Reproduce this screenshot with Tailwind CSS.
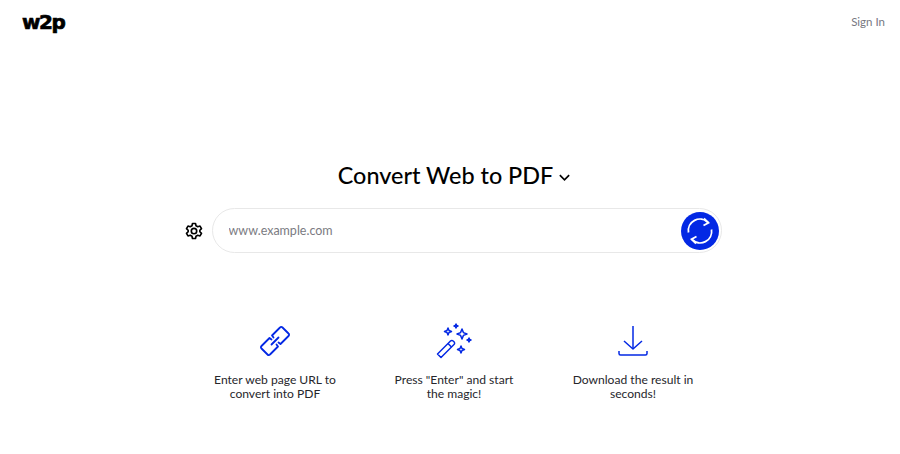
<!DOCTYPE html>
<html lang="en">
<head>
    <meta charset="UTF-8">
    <title>Convert Web to PDF</title>
    <script src="https://cdn.jsdelivr.net/npm/@tailwindcss/browser@4"></script>
</head>
<body class="bg-white h-[454px] overflow-hidden font-['Lato',sans-serif] text-[#1a1a1a]">
    <header class="flex items-start justify-between h-[44px] pl-[22px] pr-[15px] pt-[8px]">
        <a href="#" class="font-['DejaVu_Sans',sans-serif] font-bold text-[20px] leading-[28px] tracking-[-1.4px] text-black [-webkit-text-stroke:0.7px_black]">w2p</a>
        <a href="#" class="text-[11.5px] leading-[28px] text-[#77787f]">Sign In</a>
    </header>

    <main class="flex flex-col items-center pl-[8px]">
        <h1 class="mt-[114px] ml-[1px] flex items-center gap-[5px] h-[36px] text-[23.4px] font-medium text-black">
            Convert Web to PDF
            <svg class="w-[13px] h-[13px] mt-[3px]" viewBox="0 0 14 14" fill="none" stroke="#000" stroke-width="1.8"><path d="M2 4.500l5 5 5-5"/></svg>
        </h1>

        <div class="mt-[14px] flex items-center w-[537px] -ml-[2px]">
            <svg class="w-[18px] h-[18px] mr-[9px] shrink-0" viewBox="0 0 24 24" fill="none" stroke="#000" stroke-width="2.200" stroke-linejoin="round"><circle cx="12" cy="12" r="3.600"/><path d="M10 2h4l.7 3 2.300 1.300 3-.9 2 3.400-2.200 2.200v2l2.200 2.200-2 3.400-3-.9L14.700 19l-.7 3h-4l-.7-3L7 17.700l-3 .9-2-3.400L4.200 13v-2L2 8.800l2-3.400 3 .9L9.300 5z"/></svg>
            <div class="flex items-center justify-between flex-1 h-[45px] border border-[#e8e8e8] rounded-full pl-[16px] pr-[2px]">
                <input type="text" placeholder="www.example.com" class="flex-1 outline-none text-[12.5px] mt-[2px] text-[#7b7b82] placeholder:text-[#7b7b82]">
                <button class="flex items-center justify-center w-[38px] h-[38px] rounded-full bg-[#0328e4]">
                    <svg class="w-[30px] h-[30px]" viewBox="0 0 30 30" fill="none" stroke="#fff" stroke-width="1.800"><path d="M3.500 16.500A11.500 11.500 0 0 1 23 6.500"/><path d="M19 2.500l4.500 4.200-5 2.800"/><path d="M26.500 13.500A11.500 11.500 0 0 1 7 23.500"/><path d="M11 27.500l-4.500-4.200 5-2.800"/></svg>
                </button>
            </div>
        </div>

        <div class="mt-[72px] grid grid-cols-3 w-[537px] text-center text-[12.1px] leading-[14px] text-[#26262b]">
            <div class="flex flex-col items-center">
                <svg class="w-[32px] h-[32px]" viewBox="0 0 32 32" fill="none" stroke="#0328e4" stroke-width="1.800" stroke-linejoin="round" stroke-linecap="round"><path d="M12.500 19.500l7-7"/><path d="M12.500 14.500l-2-1.500-8 8c-.8.8-.8 1.800 0 2.500l6 6c.8.8 1.800.8 2.500 0l8-8-1.500-2"/><path d="M19.500 17.500l2 1.500 8-8c.8-.8.8-1.800 0-2.500l-6-6c-.8-.8-1.800-.8-2.500 0l-8 8 1.500 2"/></svg>
                <p class="mt-[16px] w-[130px]">Enter web page URL to convert into PDF</p>
            </div>
            <div class="flex flex-col items-center">
                <svg class="w-[36px] h-[36px] -mt-[2px]" viewBox="0 0 36 36" fill="none" stroke="#0328e4" stroke-width="1.500" stroke-linejoin="round"><path d="M1.500 31l13-13c.8-.8 2-.8 2.700 0l.8.8c.8.8.8 2 0 2.700L5 34.500z"/><path d="M12 20.500l3.500 3.500"/><path d="M12 5l1 2.500 2.500 1-2.500 1-1 2.500-1-2.500-2.500-1 2.500-1z"/><path d="M26 6l1.400 3.600L31 11l-3.600 1.400L26 16l-1.400-3.600L21 11l3.600-1.400z"/><path d="M20 1l.6 1.400L22 3l-1.400.6L20 5l-.6-1.400L18 3l1.400-.6z"/><path d="M33 15l.6 1.400 1.400.6-1.400.6L33 19l-.6-1.400-1.400-.6 1.400-.6z"/><path d="M25 23l1 2.500 2.500 1-2.500 1-1 2.500-1-2.500-2.500-1 2.500-1z"/></svg>
                <p class="mt-[14px] w-[130px]">Press "Enter" and start the magic!</p>
            </div>
            <div class="flex flex-col items-center">
                <svg class="w-[32px] h-[32px]" viewBox="0 0 32 32" fill="none" stroke="#0328e4" stroke-width="1.500" stroke-linejoin="round"><path d="M16 1v23"/><path d="M7 16l9 8 9-8"/><path d="M2 26v2.500c0 .8.5 1.500 1.500 1.500h25c1 0 1.500-.7 1.500-1.500V26"/></svg>
                <p class="mt-[16px] w-[130px]">Download the result in seconds!</p>
            </div>
        </div>
    </main>
</body>
</html>
